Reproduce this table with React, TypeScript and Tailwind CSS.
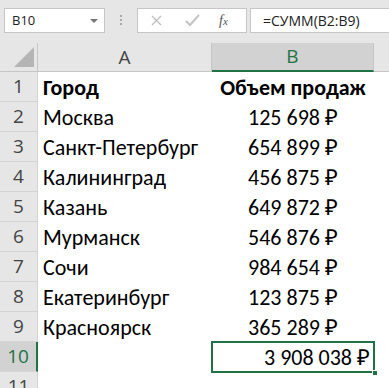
import React from 'react';

const rows: [string, string][] = [
  ['Москва', '125 698 ₽'],
  ['Санкт-Петербург', '654 899 ₽'],
  ['Калининград', '456 875 ₽'],
  ['Казань', '649 872 ₽'],
  ['Мурманск', '546 876 ₽'],
  ['Сочи', '984 654 ₽'],
  ['Екатеринбург', '123 875 ₽'],
  ['Красноярск', '365 289 ₽'],
];

const cellFont = { fontFamily: "Calibri, Carlito, 'Liberation Sans', sans-serif" };

const RowHead = ({ n, active }: { n: number; active?: boolean }) => (
  <div
    className={
      'flex h-[30px] items-center justify-center border-b border-r border-[#d4d4d4] text-[19px] ' +
      (active ? 'bg-[#d2d2d2] border-r-2 border-r-[#217346] text-[#217346]' : 'bg-[#e6e6e6] text-[#444]')
    }
    style={{ fontFamily: "'Open Sans', sans-serif" }}
  >
    {n}
  </div>
);

export default function App() {
  return (
    <div className="w-[389px] h-[388px] overflow-hidden bg-white select-none">
      {/* formula bar */}
      <div className="flex h-[43px] items-start bg-[#e6e6e6] pt-[8px] pl-[4px]" style={{ fontFamily: "'Open Sans', sans-serif" }}>
        <div className="flex h-[25px] w-[101px] items-center justify-between border border-[#c6c6c6] bg-white pl-[7px] pr-[6px] text-[13px] text-[#222]">
          <span>B10</span>
          <span className="h-0 w-0 border-x-[4px] border-t-[4px] border-x-transparent border-t-[#777]" />
        </div>
        <div className="flex w-[32px] flex-col items-center gap-[2px] pt-[7px]">
          <span className="h-[2px] w-[2px] bg-[#aaa]" />
          <span className="h-[2px] w-[2px] bg-[#aaa]" />
          <span className="h-[2px] w-[2px] bg-[#aaa]" />
        </div>
        <div className="flex h-[25px] w-[110px] items-center border border-[#c6c6c6] bg-white">
          <svg width="36" height="23" viewBox="0 0 36 23" className="ml-[1px]">
            <path d="M13 7 L22 16 M22 7 L13 16" stroke="#bdbdbd" strokeWidth="1.3" />
          </svg>
          <svg width="36" height="23" viewBox="0 0 36 23">
            <path d="M11 12 L15 16 L24 6" stroke="#c4c4c4" strokeWidth="2" fill="none" />
          </svg>
          <span className="ml-[8px] italic text-[14px] text-[#555]" style={{ fontFamily: "'Liberation Serif', serif" }}>
            f<span className="text-[11px]">x</span>
          </span>
        </div>
        <div className="ml-[3px] flex h-[25px] flex-1 items-center border border-r-0 border-[#c6c6c6] bg-white pl-[12px] text-[14px] text-[#222]">
          =СУММ(B2:B9)
        </div>
      </div>

      {/* sheet */}
      <div className="grid grid-cols-[38px_174px_162px_1fr]" style={cellFont}>
        {/* column headers */}
        <div className="relative h-[29px] border-b border-r border-[#c6c6c6] bg-[#e6e6e6]">
          <div className="absolute bottom-[4px] right-[3px] h-0 w-0 border-b-[20px] border-l-[20px] border-b-[#b5b5b5] border-l-transparent" />
        </div>
        <div
          className="flex h-[29px] items-center justify-center border-b border-r border-[#c6c6c6] bg-[#e6e6e6] text-[19px] text-[#444]"
          style={{ fontFamily: "'Open Sans', sans-serif" }}
        >
          A
        </div>
        <div
          className="flex h-[29px] items-center justify-center border-b-2 border-r border-b-[#217346] border-r-[#c6c6c6] bg-[#d2d2d2] text-[19px] text-[#217346]"
          style={{ fontFamily: "'Open Sans', sans-serif" }}
        >
          B
        </div>
        <div className="h-[29px] border-b border-[#c6c6c6] bg-[#e6e6e6]" />

        {/* row 1 */}
        <RowHead n={1} />
        <div className="flex h-[30px] items-center pl-[5px] text-[22px] font-bold text-black">Город</div>
        <div className="flex h-[30px] items-center justify-center text-[22px] font-bold text-black">Объем продаж</div>
        <div />

        {rows.map(([city, sum], i) => (
          <React.Fragment key={city}>
            <RowHead n={i + 2} />
            <div className="flex h-[30px] items-center pl-[5px] text-[22px] text-black">{city}</div>
            <div className="flex h-[30px] items-center justify-center text-[22px] text-black">{sum}</div>
            <div />
          </React.Fragment>
        ))}

        {/* row 10 */}
        <RowHead n={10} active />
        <div className="h-[30px]" />
        <div className="relative flex h-[30px] items-center justify-end pr-[4px] text-[22px] text-black">
          <div className="absolute inset-[-1px] border-2 border-[#217346]" />
          <div className="absolute bottom-[-4px] right-[-4px] h-[6px] w-[6px] border border-white bg-[#217346]" />
          3 908 038 ₽
        </div>
        <div />

        <RowHead n={11} />
        <div />
        <div />
        <div />
      </div>
    </div>
  );
}
